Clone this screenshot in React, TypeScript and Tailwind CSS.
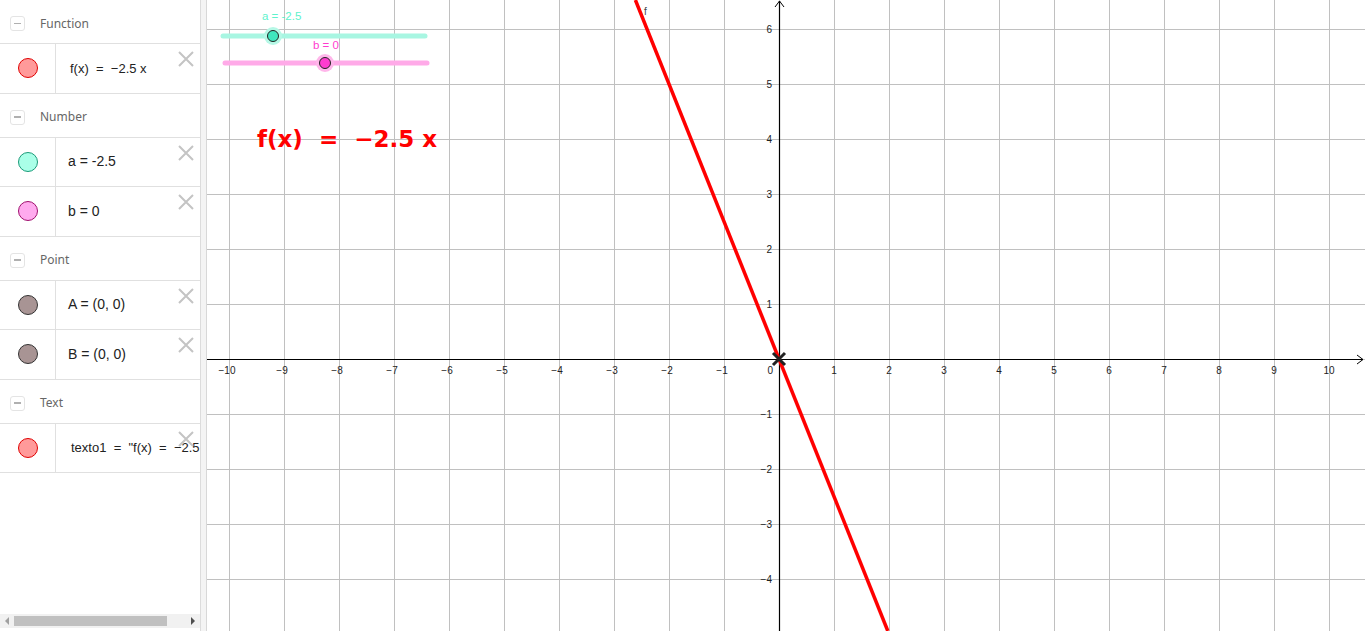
import React from "react";

type Item = {
  label: React.ReactNode;
  fill: string;
  stroke: string;
  size: string;
};

type Group = { title: string; items: Item[] };

const groups: Group[] = [
  {
    title: "Function",
    items: [{ label: "f(x)  =  −2.5 x", fill: "#ff9a9a", stroke: "#e00000", size: "pl-[14px] text-[13px]" }],
  },
  {
    title: "Number",
    items: [
      { label: "a = -2.5", fill: "#aaffe8", stroke: "#1a9a78", size: "pl-[12px] text-[14px]" },
      { label: "b = 0", fill: "#ffaaee", stroke: "#a0106e", size: "pl-[12px] text-[14px]" },
    ],
  },
  {
    title: "Point",
    items: [
      { label: "A = (0, 0)", fill: "#a89494", stroke: "#333333", size: "pl-[12px] text-[14px]" },
      { label: "B = (0, 0)", fill: "#a89494", stroke: "#333333", size: "pl-[12px] text-[14px]" },
    ],
  },
  {
    title: "Text",
    items: [
      { label: "texto1  =  \"f(x)  =  −2.5 x\"", fill: "#ff9a9a", stroke: "#e00000", size: "pl-[15px] text-[13px]" },
    ],
  },
];

const O = { x: 780, y: 359 };
const U = 55;
const LEFT = 208;

function CloseIcon() {
  return (
    <svg width="16" height="16" viewBox="0 0 16 16" className="absolute right-[6px] top-[7px]">
      <path d="M1 1 L15 15 M15 1 L1 15" stroke="#c4c4c4" strokeWidth="2" />
    </svg>
  );
}

function AlgebraPanel() {
  return (
    <div className="relative flex h-[631px] w-[201px] shrink-0 flex-col border-r border-[#dcdcdc] bg-white">
      {groups.map((g) => (
        <div key={g.title}>
          <div className="flex h-[44px] items-center border-b border-[#e0e0e0] pt-[4px]">
            <div className="ml-[10px] flex h-[15px] w-[15px] items-center justify-center rounded-[3px] border border-[#e4e4e4]">
              <div className="h-[1.5px] w-[7px] bg-[#b0b0b0]" />
            </div>
            <span className="ml-[15px] text-[12px] text-[#666] [font-family:'Noto_Sans',sans-serif]">
              {g.title}
            </span>
          </div>
          {g.items.map((it, i) => (
            <div key={i} className="relative flex h-[49.5px] border-b border-[#e0e0e0]">
              <div className="flex w-[56px] shrink-0 items-center justify-center border-r border-[#e0e0e0]">
                <div
                  className="h-[20px] w-[20px] rounded-full border"
                  style={{ background: it.fill, borderColor: it.stroke }}
                />
              </div>
              <div
                className={`flex flex-1 items-center overflow-hidden whitespace-pre text-[#222] [font-family:'Liberation_Sans',Arial,sans-serif] ${it.size}`}
              >
                {it.label}
              </div>
              <CloseIcon />
            </div>
          ))}
        </div>
      ))}
      <div className="flex-1" />
      <div className="mb-[3px] flex h-[14px] items-center bg-[#f1f1f1]">
        <div className="flex w-[14px] items-center justify-center">
          <div className="h-0 w-0 border-y-[4px] border-r-[4px] border-y-transparent border-r-[#a0a0a0]" />
        </div>
        <div className="h-[10px] w-[153px] bg-[#c0c0c0]" />
        <div className="flex-1" />
        <div className="flex w-[14px] items-center justify-center">
          <div className="h-0 w-0 border-y-[4px] border-l-[4px] border-y-transparent border-l-[#505050]" />
        </div>
      </div>
    </div>
  );
}

function Graph() {
  const xs: number[] = [];
  for (let k = -10; k <= 10; k++) xs.push(k);
  const ys: number[] = [];
  for (let k = -5; k <= 6; k++) ys.push(k);
  const lab = (k: number) => (k < 0 ? `−${-k}` : `${k}`);

  return (
    <div className="relative h-[631px] flex-1 overflow-hidden bg-white">
      <svg width="1158" height="631" className="absolute left-0 top-0">
        <g transform={`translate(${-LEFT},0)`} fontFamily="'Liberation Sans', Arial, sans-serif">
          {/* grid */}
          {xs.map((k) => (
            <line key={`gx${k}`} x1={O.x + k * U + 0.5} y1={0} x2={O.x + k * U + 0.5} y2={631} stroke="#c0c0c0" strokeWidth="1" />
          ))}
          {ys.map((k) => (
            <line key={`gy${k}`} x1={LEFT} y1={O.y - k * U + 0.5} x2={1366} y2={O.y - k * U + 0.5} stroke="#c0c0c0" strokeWidth="1" />
          ))}
          {/* axes */}
          <line x1={LEFT} y1={O.y + 0.5} x2={1364} y2={O.y + 0.5} stroke="#000" strokeWidth="1.2" />
          <line x1={O.x + 0.5} y1={1} x2={O.x + 0.5} y2={631} stroke="#000" strokeWidth="1.2" />
          <path d={`M1358 ${O.y - 4} L1364 ${O.y + 0.5} L1358 ${O.y + 5}`} fill="none" stroke="#000" strokeWidth="1" />
          <path d={`M${O.x - 4} 7 L${O.x + 0.5} 1 L${O.x + 5} 7`} fill="none" stroke="#000" strokeWidth="1" />
          {/* labels */}
          {xs.map((k) =>
            k === 0 ? null : (
              <text key={`lx${k}`} x={O.x + k * U - (k < 0 ? 2 : 0)} y={O.y + 15} fontSize="10" fill="#222" textAnchor="middle">
                {lab(k)}
              </text>
            )
          )}
          <text x={O.x - 6} y={O.y + 15} fontSize="10" fill="#222" textAnchor="end">
            0
          </text>
          {ys.map((k) =>
            k === 0 || k === -5 ? null : (
              <text key={`ly${k}`} x={O.x - 7} y={O.y - k * U + 4} fontSize="10" fill="#222" textAnchor="end">
                {lab(k)}
              </text>
            )
          )}
          {/* function line */}
          <line x1={636.4} y1={0} x2={888.8} y2={631} stroke="#ff0000" strokeWidth="3.5" />
          <text x={645} y={15} fontSize="10" fill="#444">
            f
          </text>
          {/* points A, B */}
          <path d={`M${O.x - 6} ${O.y - 6} L${O.x + 6} ${O.y + 6} M${O.x + 6} ${O.y - 6} L${O.x - 6} ${O.y + 6}`} stroke="#222" strokeWidth="3" />
          {/* slider a */}
          <line x1={224} y1={36} x2={426} y2={36} stroke="#a8f6e2" strokeWidth="5" strokeLinecap="round" />
          <circle cx={274} cy={36} r={9} fill="#b6f8e6" />
          <circle cx={274} cy={36} r={5.5} fill="#40e6be" stroke="#222" strokeWidth="1" />
          <text x={263} y={20} fontSize="11.5" fill="#5ef2cc">
            a = -2.5
          </text>
          {/* slider b */}
          <line x1={226} y1={63} x2={428} y2={63} stroke="#ffaae8" strokeWidth="5" strokeLinecap="round" />
          <circle cx={326} cy={63} r={9} fill="#ffb6ea" />
          <circle cx={326} cy={63} r={5.5} fill="#ff3ccf" stroke="#222" strokeWidth="1" />
          <text x={314} y={49} fontSize="11.5" fill="#ff3ccf">
            b = 0
          </text>
          {/* text object */}
          <text
            x={258}
            y={147}
            fontSize="23"
            fontWeight="bold"
            fill="#ff0000"
            fontFamily="'DejaVu Sans', sans-serif"
            style={{ whiteSpace: "pre" }}
          >
            {"f(x)  =  −2.5 x"}
          </text>
        </g>
      </svg>
    </div>
  );
}

export default function App() {
  return (
    <div className="flex h-[631px] w-[1366px] overflow-hidden bg-white">
      <AlgebraPanel />
      <div className="h-[631px] w-[6px] shrink-0 border-r border-[#d8d8d8] bg-[#f4f4f4]" />
      <Graph />
    </div>
  );
}
